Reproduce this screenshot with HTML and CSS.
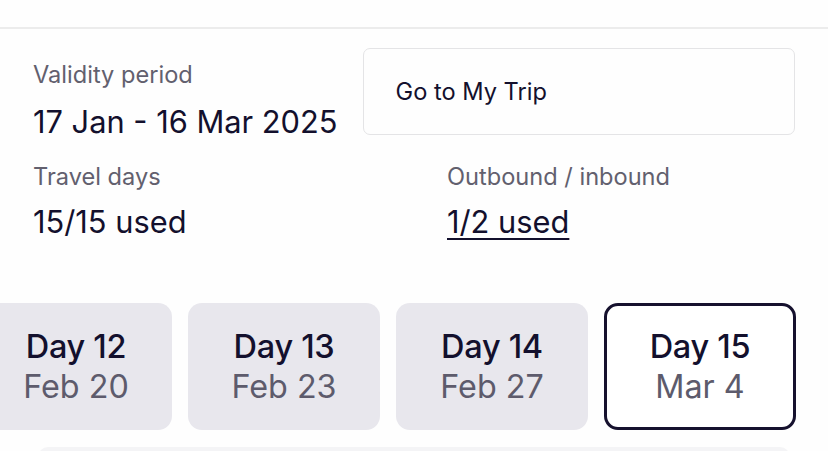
FILE: index.html
```html
<!DOCTYPE html>
<html lang="en">
<head>
    <meta charset="UTF-8">
    <meta name="viewport" content="width=device-width, initial-scale=1.0">
    <title>My Pass</title>
    <link rel="stylesheet" href="styles.css">
</head>
<body>
<div class="divider"></div>

<div class="summary">
    <div class="top-row">
        <div class="field first">
            <div class="label">Validity period</div>
            <div class="value">17 Jan - 16 Mar 2025</div>
        </div>
        <a class="trip-button" href="#">Go to My Trip</a>
    </div>

    <div class="stats">
        <div class="field">
            <div class="label">Travel days</div>
            <div class="value">15/15 used</div>
        </div>
        <div class="field">
            <div class="label">Outbound / inbound</div>
            <a class="value link" href="#">1/2 used</a>
        </div>
    </div>
</div>

<div class="days">
    <div class="day-track">
        <div class="day">
            <span class="day-name">Day 12</span>
            <span class="day-date">Feb 20</span>
        </div>
        <div class="day">
            <span class="day-name">Day 13</span>
            <span class="day-date">Feb 23</span>
        </div>
        <div class="day">
            <span class="day-name">Day 14</span>
            <span class="day-date">Feb 27</span>
        </div>
        <div class="day selected">
            <span class="day-name">Day 15</span>
            <span class="day-date">Mar 4</span>
        </div>
    </div>
</div>

<div class="next-card"></div>
</body>
</html>
```

FILE: styles.css
```css
body {
    margin: 0;
    padding: 0;
    background: #fefefe;
    font-family: Inter, "Noto Sans", sans-serif;
    color: #13102d;
    overflow: hidden;
}
.divider {
    height: 2px;
    margin-top: 27px;
    background: #ececec;
}
.summary {
    padding: 19px 33px 0;
}
.top-row {
    display: flex;
    gap: 25px;
    align-items: flex-start;
}
.field.first {
    padding-top: 12px;
}
.label {
    font-size: 23.6px;
    line-height: 30px;
    color: #62606e;
}
.value {
    display: block;
    margin-top: 12px;
    font-size: 30.8px;
    line-height: 40px;
    color: #13102d;
}
.trip-button {
    flex: 1;
    height: 85px;
    display: flex;
    align-items: center;
    padding-left: 32px;
    border: 1px solid #e4e4e6;
    border-radius: 7px;
    font-size: 23.6px;
    color: #13102d;
    text-decoration: none;
}
.stats {
    display: grid;
    grid-template-columns: 414px 1fr;
    margin-top: 20px;
}
.stats .value {
    margin-top: 10px;
}
.link {
    text-decoration: underline;
    text-decoration-thickness: 2px;
    text-underline-offset: 5px;
}
.days {
    margin-top: 61px;
    overflow: hidden;
}
.day-track {
    display: flex;
    gap: 16px;
    margin-left: -20px;
}
.day {
    flex: 0 0 192px;
    height: 127px;
    box-sizing: border-box;
    border-radius: 14px;
    background: #e8e7ed;
    display: flex;
    flex-direction: column;
    align-items: center;
    justify-content: center;
}
.day.selected {
    background: #ffffff;
    border: 3px solid #16112e;
}
.day-name {
    font-size: 32.5px;
    font-weight: 500;
    line-height: 40px;
    letter-spacing: -0.3px;
}
.day-date {
    font-size: 32.3px;
    line-height: 40px;
    color: #5d5b6c;
}
.next-card {
    margin: 17px 38px 0;
    height: 20px;
    border-radius: 10px 10px 0 0;
    background: #f4f4f6;
}
```
